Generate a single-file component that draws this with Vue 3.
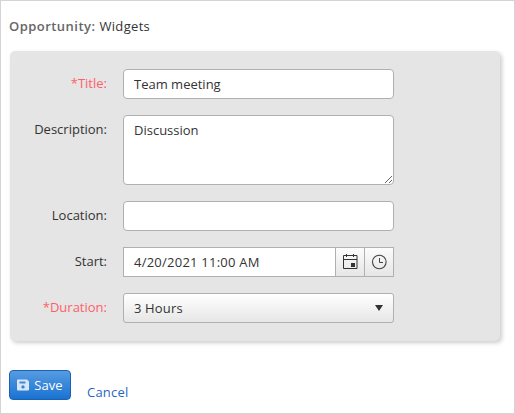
<script setup>
import { ref } from 'vue'

const title = ref('Team meeting')
const description = ref('Discussion')
const location = ref('')
const start = ref('4/20/2021 11:00 AM')
const duration = ref('3 Hours')
</script>

<template>
  <main class="page">
    <header class="heading"><strong>Opportunity:</strong><span>Widgets</span></header>

    <form class="panel" @submit.prevent>
      <div class="row">
        <label class="label required" for="title">*Title:</label>
        <input id="title" v-model="title" class="field" type="text" />
      </div>
      <div class="row">
        <label class="label" for="description">Description:</label>
        <textarea id="description" v-model="description" class="field area" spellcheck="false"></textarea>
      </div>
      <div class="row">
        <label class="label" for="location">Location:</label>
        <input id="location" v-model="location" class="field" type="text" />
      </div>
      <div class="row">
        <label class="label" for="start">Start:</label>
        <div class="picker">
          <input id="start" v-model="start" class="date" type="text" />
          <button class="pick" type="button" aria-label="Choose date">
            <svg width="16" height="16" viewBox="0 0 16 16">
              <path d="M1.5 1.5h13.5v13H1.5zM1 5.5h14" fill="none" stroke="#333" />
              <path d="M4 0h1v3H4zM11 0h1v3h-1zM3 1h3v1H3zM10 1h3v1h-3zM9 9h4v4H9z" fill="#333" />
            </svg>
          </button>
          <button class="pick" type="button" aria-label="Choose time">
            <svg width="16" height="16" viewBox="0 0 16 16">
              <circle cx="8.3" cy="8" r="6.8" fill="none" stroke="#444" stroke-width="1.1" />
              <path d="M8.5 4v4.5H12" fill="none" stroke="#444" />
            </svg>
          </button>
        </div>
      </div>
      <div class="row">
        <span class="label required">*Duration:</span>
        <button class="field select" type="button">
          <span>{{ duration }}</span>
          <svg width="8" height="6" viewBox="0 0 8 6"><path d="M0 0h8L4 6z" fill="#333" /></svg>
        </button>
      </div>
    </form>

    <footer class="actions">
      <button class="save" type="button">
        <svg width="12" height="12" viewBox="0 0 12 12">
          <path fill="#d9e8f8" fill-rule="evenodd" d="M1 .5h9l2 2v8a1 1 0 0 1-1 1H1a1 1 0 0 1-1-1v-9a1 1 0 0 1 1-1zM2.5 2.5v2h6v-2zM6 6.2a1.7 1.7 0 1 0 0 3.4 1.7 1.7 0 0 0 0-3.4z" />
        </svg>
        <span>Save</span>
      </button>
      <a class="cancel" href="#">Cancel</a>
    </footer>
  </main>
</template>

<style>
body {
  margin: 0;
  background: #fff;
}
</style>

<style scoped>
.page,
.page * {
  box-sizing: border-box;
}
.page {
  width: 515px;
  height: 414px;
  border: 1px solid #d4d4d4;
  padding: 16px 14px 0 9px;
  overflow: hidden;
  font-family: "Open Sans", "Noto Sans", sans-serif;
  font-size: 13px;
  line-height: 18px;
  color: #333;
}
input,
textarea,
button {
  margin: 0;
  font: inherit;
  color: inherit;
  letter-spacing: inherit;
  outline: none;
}
.heading {
  display: flex;
  gap: 4px;
  height: 34px;
  margin-left: -1px;
  letter-spacing: 0.32px;
}
.heading strong {
  font-weight: 600;
  color: #666;
  letter-spacing: 0.46px;
}
.panel {
  display: flex;
  flex-direction: column;
  gap: 16px;
  width: 490px;
  height: 290px;
  padding: 18px 0;
  background: #e5e5e5;
  border-radius: 5px;
  box-shadow: 2px 2px 4px rgba(0, 0, 0, 0.2);
}
.row {
  display: flex;
  align-items: flex-start;
  gap: 16px;
}
.label {
  width: 97px;
  padding-top: 5px;
  text-align: right;
  white-space: nowrap;
}
.required {
  color: #ff6068;
}
.field {
  width: 271px;
  height: 30px;
  padding: 0 10px;
  background: #fff;
  border: 1px solid #b0b0b0;
  border-radius: 4px;
}
.area {
  display: block;
  height: 70px;
  padding-top: 5px;
  resize: both;
}
.picker {
  display: flex;
  width: 271px;
  height: 30px;
  border: 1px solid #b0b0b0;
  background: #fff;
}
.date {
  width: 211px;
  padding: 0 10px;
  border: 0;
  background: transparent;
  letter-spacing: 0.24px;
}
.pick {
  display: flex;
  align-items: center;
  justify-content: center;
  width: 29px;
  padding: 0;
  border: 0;
  border-left: 1px solid #b0b0b0;
  background: linear-gradient(#fcfcfc, #e6e6e6);
}
.select {
  display: flex;
  align-items: center;
  justify-content: space-between;
  border-radius: 3px;
  background: linear-gradient(#fff, #e6e6e6);
}
.select span {
  letter-spacing: 0.15px;
}
.actions {
  display: flex;
  align-items: flex-start;
  gap: 16px;
  margin: 29px 0 0 -1px;
}
.save {
  display: flex;
  align-items: center;
  justify-content: center;
  gap: 5px;
  width: 62px;
  height: 30px;
  padding: 0;
  border: 1px solid #1762b5;
  border-radius: 4px;
  background: linear-gradient(#569be2, #1a73d1);
  color: #fff;
}
.save span {
  letter-spacing: 0.1px;
}
.cancel {
  margin-top: 13px;
  color: #1f67c4;
  text-decoration: none;
  letter-spacing: 0.2px;
}
</style>
